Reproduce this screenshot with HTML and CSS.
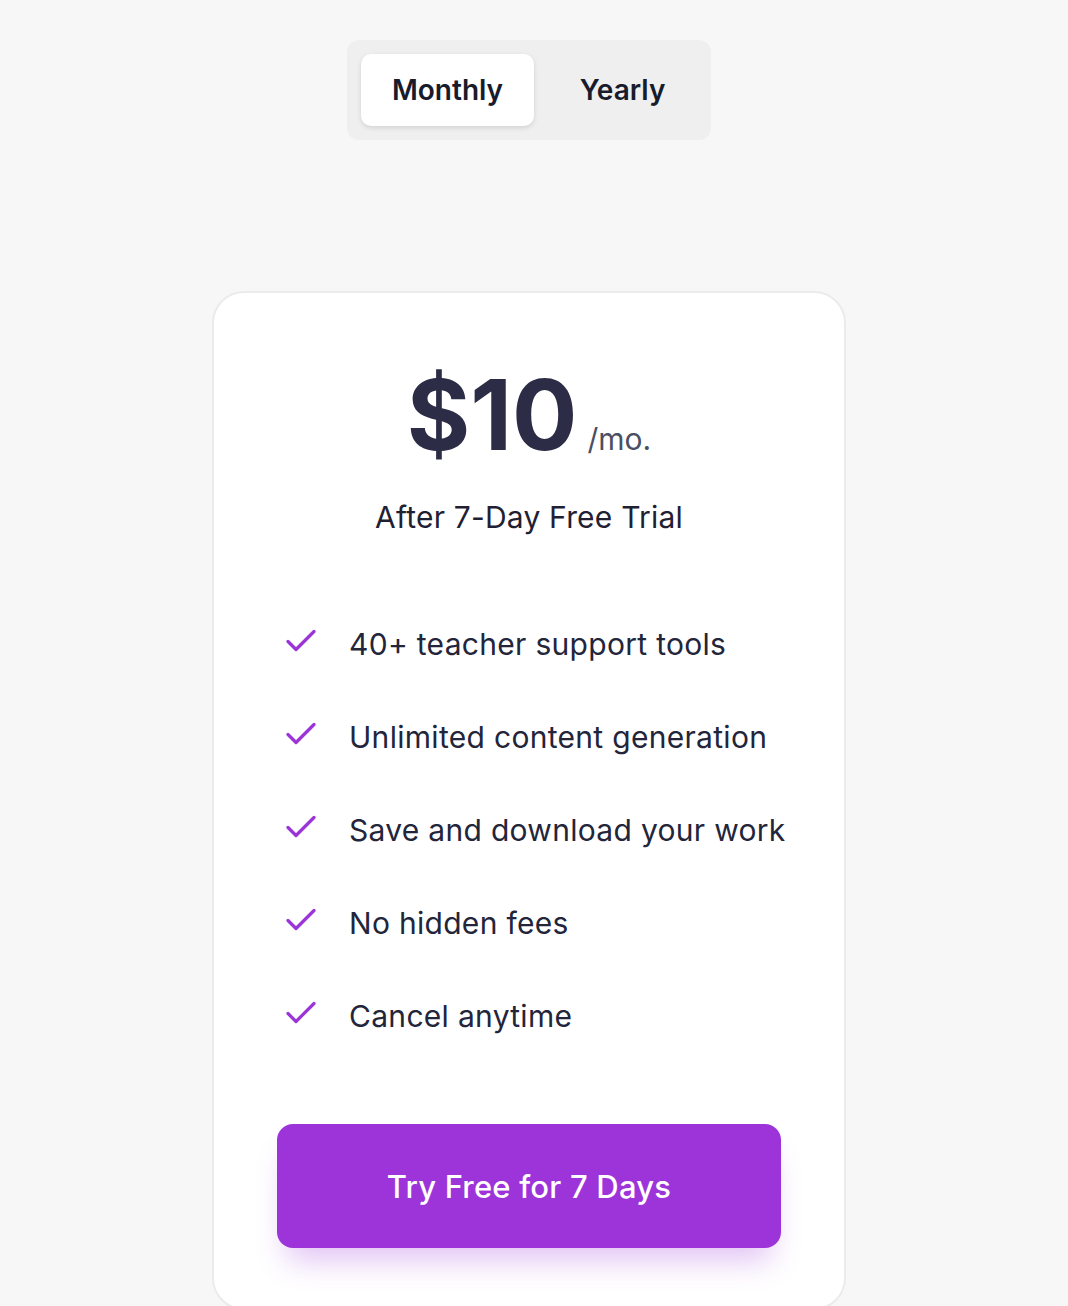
FILE: index.html
```html
<!DOCTYPE html>
<html lang="en">
<head>
<meta charset="utf-8">
<title>Pricing</title>
<link rel="stylesheet" href="styles.css">
</head>
<body>
<main class="page">
  <div class="toggle">
    <button class="tab tab-active">Monthly</button>
    <button class="tab">Yearly</button>
  </div>
  <section class="card">
    <div class="price">
      <span class="amount">$10</span>
      <span class="per">/mo.</span>
    </div>
    <p class="trial">After 7-Day Free Trial</p>
    <ul class="features">
      <li class="feature"><svg class="check" viewBox="0 0 30 30" width="30" height="30"><polyline points="2,12.5 10,20.5 28,2.5" fill="none" stroke="#9b35d8" stroke-width="3.2" stroke-linecap="round" stroke-linejoin="round"/></svg><span>40+ teacher support tools</span></li>
      <li class="feature"><svg class="check" viewBox="0 0 30 30" width="30" height="30"><polyline points="2,12.5 10,20.5 28,2.5" fill="none" stroke="#9b35d8" stroke-width="3.2" stroke-linecap="round" stroke-linejoin="round"/></svg><span>Unlimited content generation</span></li>
      <li class="feature"><svg class="check" viewBox="0 0 30 30" width="30" height="30"><polyline points="2,12.5 10,20.5 28,2.5" fill="none" stroke="#9b35d8" stroke-width="3.2" stroke-linecap="round" stroke-linejoin="round"/></svg><span>Save and download your work</span></li>
      <li class="feature"><svg class="check" viewBox="0 0 30 30" width="30" height="30"><polyline points="2,12.5 10,20.5 28,2.5" fill="none" stroke="#9b35d8" stroke-width="3.2" stroke-linecap="round" stroke-linejoin="round"/></svg><span>No hidden fees</span></li>
      <li class="feature"><svg class="check" viewBox="0 0 30 30" width="30" height="30"><polyline points="2,12.5 10,20.5 28,2.5" fill="none" stroke="#9b35d8" stroke-width="3.2" stroke-linecap="round" stroke-linejoin="round"/></svg><span>Cancel anytime</span></li>
    </ul>
    <button class="cta">Try Free for 7 Days</button>
  </section>
</main>
</body>
</html>
```

FILE: styles.css
```css
* { box-sizing: border-box; }
html, body { margin: 0; padding: 0; }
body {
  background: #f7f7f7;
  font-family: Inter, "Noto Sans", "Liberation Sans", sans-serif;
  color: #1f2133;
  overflow: hidden;
}
.page {
  width: 1058px;
  display: flex;
  flex-direction: column;
  align-items: center;
  padding-top: 40px;
}
.toggle {
  display: flex;
  gap: 14px;
  width: 364px;
  height: 100px;
  padding: 14px;
  background: #efefef;
  border-radius: 12px;
}
.tab {
  border: none;
  background: transparent;
  font-family: inherit;
  font-size: 28px;
  font-weight: 600;
  color: #181b2b;
  border-radius: 10px;
  width: 149px;
  padding: 0;
  cursor: pointer;
}
.tab-active {
  width: 173px;
  background: #ffffff;
  box-shadow: 0 2px 5px rgba(0, 0, 0, 0.12);
}
.card {
  margin-top: 151px;
  width: 634px;
  background: #ffffff;
  border: 2px solid #ebebeb;
  border-radius: 32px;
  padding: 74px 63px 60px;
  display: flex;
  flex-direction: column;
  align-items: center;
}
.price {
  display: flex;
  align-items: baseline;
  gap: 10px;
  line-height: 96px;
  height: 96px;
}
.amount {
  font-size: 97px;
  font-weight: 700;
  color: #2c2c47;
  letter-spacing: 0;
}
.per {
  font-size: 30px;
  font-weight: 400;
  color: #4b4f63;
}
.trial {
  margin: 34px 0 0;
  font-size: 30px;
  line-height: 40px;
  letter-spacing: 0.2px;
  color: #1f2133;
}
.features {
  list-style: none;
  margin: 84px 0 0;
  padding: 0;
  width: 100%;
  display: flex;
  flex-direction: column;
  gap: 48px;
}
.feature {
  display: flex;
  align-items: center;
  height: 45px;
  font-size: 30px;
  letter-spacing: 0.3px;
  white-space: nowrap;
  color: #23253a;
  padding-left: 9px;
  gap: 33px;
}
.check { flex: none; }
.cta {
  margin-top: 86px;
  width: 504px;
  height: 124px;
  border: none;
  border-radius: 16px;
  background: #9d34da;
  color: #ffffff;
  font-family: inherit;
  font-size: 31px;
  font-weight: 500;
  letter-spacing: 0.2px;
  box-shadow: 0 22px 30px -10px rgba(157, 52, 218, 0.3);
  cursor: pointer;
}
```
